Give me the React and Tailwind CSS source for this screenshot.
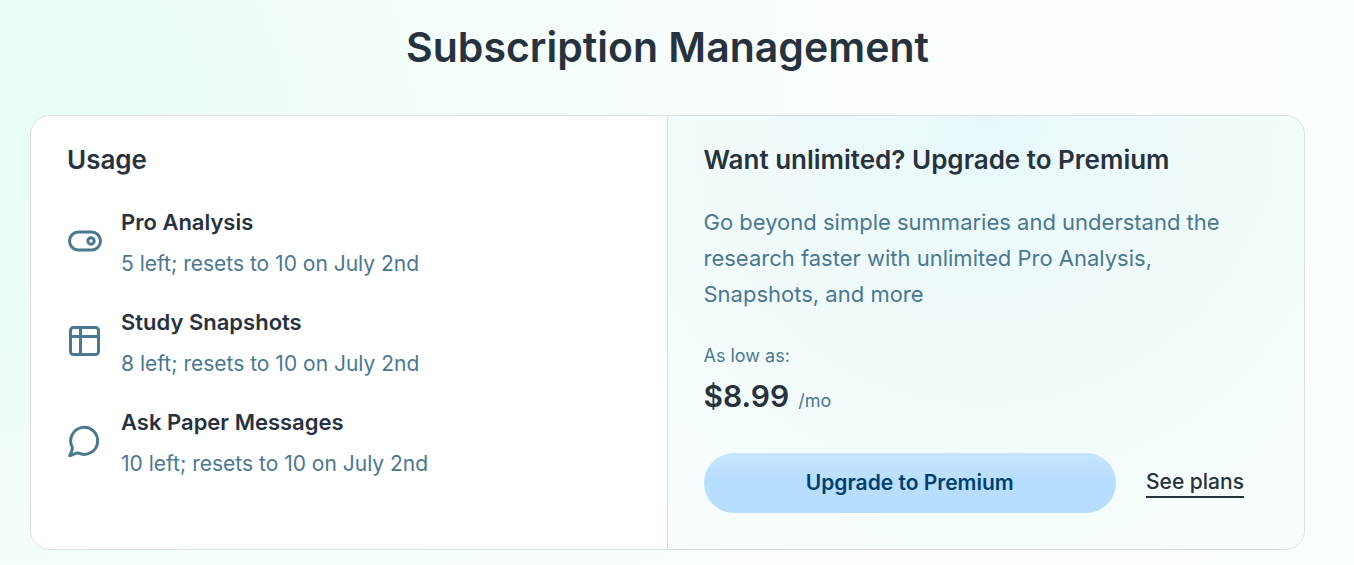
const usage = [
  { icon: "toggle", title: "Pro Analysis", detail: "5 left; resets to 10 on July 2nd" },
  { icon: "table", title: "Study Snapshots", detail: "8 left; resets to 10 on July 2nd" },
  { icon: "chat", title: "Ask Paper Messages", detail: "10 left; resets to 10 on July 2nd" },
];

const UsageIcon = ({ name }) => (
  <svg
    viewBox="0 0 36 36"
    className="mt-5 h-9 w-9 shrink-0 text-[#4a7890]"
    fill="none"
    stroke="currentColor"
    strokeWidth="3"
    strokeLinecap="round"
    strokeLinejoin="round"
    aria-hidden="true"
  >
    {name === "toggle" && (
      <>
        <rect x="2.5" y="8" width="31" height="18" rx="9" />
        <circle cx="24" cy="17" r="3.2" />
      </>
    )}
    {name === "table" && (
      <>
        <rect x="3.5" y="3.5" width="28" height="27" rx="3" />
        <path d="M3.5 12.5h28M13.5 3.5v27" />
      </>
    )}
    {name === "chat" && (
      <path d="M5.3 23.3A13.5 13.5 0 1 1 11.7 29.2Q10.3 28.7 8.8 29.4L2.7 31.8Q5.5 26.7 5.3 23.3Z" />
    )}
  </svg>
);

const Usage = () => (
  <section className="border-r border-[#dce0e0] bg-white px-9 py-6">
    <h2 className="text-[26px] leading-10 font-semibold">Usage</h2>
    <ul className="mt-6">
      {usage.map((item) => (
        <li key={item.title} className="mb-5 flex items-start gap-[18px]">
          <UsageIcon name={item.icon} />
          <div>
            <h3 className="text-[22px] leading-9 font-semibold">{item.title}</h3>
            <p className="mt-1 text-[21px] leading-10 text-[#4a7890]">{item.detail}</p>
          </div>
        </li>
      ))}
    </ul>
  </section>
);

const Upgrade = () => (
  <section className="bg-[radial-gradient(circle_at_50%_0%,#e8f8fa_0%,#f0fbfb_45%,#f9fefd_100%)] px-9 pt-6 pb-9">
    <h2 className="text-[26px] leading-10 font-semibold">
      Want unlimited? Upgrade to Premium
    </h2>
    <p className="mt-6 text-[22px] leading-9 text-[#4a7890]">
      Go beyond simple summaries and understand the research faster with
      unlimited Pro Analysis, Snapshots, and more
    </p>
    <p className="mt-7 text-[18px] leading-8 text-[#4a7890]">As low as:</p>
    <p className="text-[18px] leading-12 text-[#4a7890]">
      <span className="mr-1 text-[30px] font-semibold text-[#27323f]">$8.99</span> /mo
    </p>
    <div className="mt-7 flex items-center gap-[30px] pr-6">
      <button
        type="button"
        className="h-[60px] flex-1 rounded-full bg-linear-to-b from-[#c7e5ff] to-[#b8deff] to-45% text-[21px] font-semibold text-[#003e70]"
      >
        Upgrade to Premium
      </button>
      <a
        href="#plans"
        className="border-b-2 border-[#27323f] text-[21px] leading-7 font-medium"
      >
        See plans
      </a>
    </div>
  </section>
);

export default function App() {
  return (
    <main className="min-h-screen bg-[radial-gradient(circle_at_0%_25%,#e8fdf6_0%,#f3fdfa_30%,#fcfffe_70%,#f9fefe_100%)] pr-[49px] pb-4 pl-[30px] font-['Inter','Liberation_Sans',sans-serif] text-[#27323f]">
      <h1 className="pt-5 text-center text-[41px] leading-[55px] font-semibold">
        Subscription Management
      </h1>
      <div className="mt-10 grid grid-cols-2 overflow-hidden rounded-[20px] border border-[#dce0e0]">
        <Usage />
        <Upgrade />
      </div>
    </main>
  );
}
